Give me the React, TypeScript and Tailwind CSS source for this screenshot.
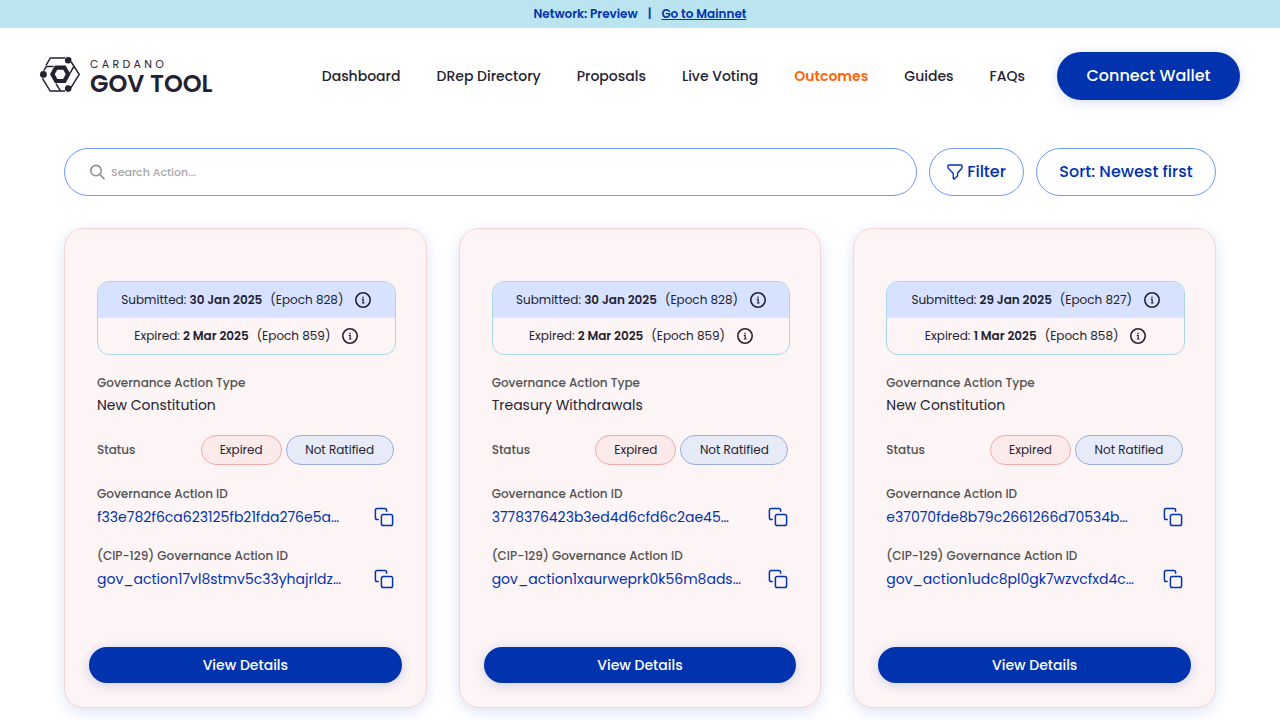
import React from "react";

const navItems = [
  { label: "Dashboard" },
  { label: "DRep Directory" },
  { label: "Proposals" },
  { label: "Live Voting" },
  { label: "Outcomes", active: true },
  { label: "Guides" },
  { label: "FAQs" },
];

interface Outcome {
  submitted: string;
  submittedEpoch: number;
  expired: string;
  expiredEpoch: number;
  type: string;
  id: string;
  cipId: string;
}

const outcomes: Outcome[] = [
  {
    submitted: "30 Jan 2025",
    submittedEpoch: 828,
    expired: "2 Mar 2025",
    expiredEpoch: 859,
    type: "New Constitution",
    id: "f33e782f6ca623125fb21fda276e5a…",
    cipId: "gov_action17vl8stmv5c33yhajrldz…",
  },
  {
    submitted: "30 Jan 2025",
    submittedEpoch: 828,
    expired: "2 Mar 2025",
    expiredEpoch: 859,
    type: "Treasury Withdrawals",
    id: "3778376423b3ed4d6cfd6c2ae45…",
    cipId: "gov_action1xaurweprk0k56m8ads…",
  },
  {
    submitted: "29 Jan 2025",
    submittedEpoch: 827,
    expired: "1 Mar 2025",
    expiredEpoch: 858,
    type: "New Constitution",
    id: "e37070fde8b79c2661266d70534b…",
    cipId: "gov_action1udc8pl0gk7wzvcfxd4c…",
  },
];

function LogoMark() {
  return (
    <svg width="40" height="38" viewBox="0 0 40 38" fill="none" stroke="#242232" aria-hidden="true">
      <g strokeWidth="1.5">
        <path d="M25 0.9H10.4L6 8.4" />
        <path d="M31.2 5L39.2 17.4L31 30.6" />
        <path d="M2.4 21.4L10.2 34.1H25" />
        <path d="M3.8 13.6L6.4 9.5H13.6" />
        <path d="M33.8 9.6L29.9 16.4" />
        <path d="M16 26.6L20.4 33.8" />
      </g>
      <path d="M16.1 10.6H24.4L28.1 17.3L24.4 24H16.1L12.4 17.3Z" strokeWidth="4.2" />
      <g fill="#242232" stroke="none">
        <circle cx="28.2" cy="3.3" r="3.3" />
        <circle cx="3.4" cy="17.4" r="3.4" />
        <circle cx="28.2" cy="31.6" r="3.3" />
      </g>
    </svg>
  );
}

function SearchIcon() {
  return (
    <svg width="16" height="16" viewBox="0 0 16 16" fill="none" stroke="#8e908e" strokeWidth="1.6" strokeLinecap="round" aria-hidden="true">
      <circle cx="7" cy="6.6" r="5.2" />
      <path d="M10.9 10.5L15 14.6" />
    </svg>
  );
}

function FilterIcon() {
  return (
    <svg width="16" height="16" viewBox="0 0 16 16" fill="none" stroke="#0033ad" strokeWidth="1.4" strokeLinejoin="round" aria-hidden="true">
      <path d="M1.8 1H14.2Q15 1 15 1.8V3.2Q15 4 14.4 4.7L10.6 9V11.8L7.2 15L6.3 14.6V10.4Q6.3 9.5 5.7 8.7L1.5 4.5Q1 3.9 1 3.2V1.8Q1 1 1.8 1Z" />
    </svg>
  );
}

function InfoIcon() {
  return (
    <svg width="16" height="16" viewBox="0 0 16 16" fill="none" stroke="#242232" aria-hidden="true">
      <circle cx="8" cy="8" r="7.2" strokeWidth="1.6" />
      <path d="M6.8 7.4H8.2V11M6.9 11H9.5" strokeWidth="1.2" />
      <circle cx="8" cy="5.2" r="0.8" fill="#242232" stroke="none" />
    </svg>
  );
}

function CopyIcon() {
  return (
    <svg width="20" height="20" viewBox="0 0 20 20" fill="none" stroke="#0033ad" strokeWidth="1.5" strokeLinecap="round" strokeLinejoin="round" aria-hidden="true">
      <rect x="7.4" y="7.4" width="11.2" height="11.2" rx="1.8" />
      <path d="M4.2 12.6H3.2A1.8 1.8 0 0 1 1.4 10.8V3.2A1.8 1.8 0 0 1 3.2 1.4H10.8A1.8 1.8 0 0 1 12.6 3.2V4.2" />
    </svg>
  );
}

function DateRow({ label, date, epoch }: { label: string; date: string; epoch: number }) {
  return (
    <div className="flex h-9 items-center justify-center text-xs">
      <span>
        {label}: <strong className="font-semibold">{date}</strong>
      </span>
      <span className="ml-2">(Epoch {epoch})</span>
      <button type="button" aria-label={`About the ${label.toLowerCase()} date`} className="ml-3">
        <InfoIcon />
      </button>
    </div>
  );
}

function IdField({ label, value }: { label: string; value: string }) {
  return (
    <div>
      <h3 className="text-xs leading-[22px] font-medium text-[#525252]">{label}</h3>
      <div className="flex h-6 items-center justify-between pr-0.5">
        <span className="text-sm whitespace-nowrap text-[#0033ad]">{value}</span>
        <button type="button" aria-label={`Copy ${label}`}>
          <CopyIcon />
        </button>
      </div>
    </div>
  );
}

function OutcomeCard({ item }: { item: Outcome }) {
  return (
    <article className="flex flex-col rounded-[20px] border border-[#f8d4d4] bg-[#fdf4f5] px-6 pt-13 pb-6 shadow-[0_4px_15px_0_#dde3f5]">
      <div className="flex flex-col pr-1.5 pl-2">
        <div className="overflow-hidden rounded-xl border border-[#a9d8e4]">
          <div className="bg-[#d6e2ff]">
            <DateRow label="Submitted" date={item.submitted} epoch={item.submittedEpoch} />
          </div>
          <DateRow label="Expired" date={item.expired} epoch={item.expiredEpoch} />
        </div>

        <div className="mt-4">
          <h3 className="text-xs leading-6 font-medium text-[#525252]">Governance Action Type</h3>
          <p className="text-sm leading-5">{item.type}</p>
        </div>

        <div className="mt-5 flex h-[30px] items-center justify-between pr-0.5">
          <h3 className="text-xs font-medium text-[#525252]">Status</h3>
          <div className="flex gap-1 text-xs">
            <span className="flex h-[30px] w-[81px] items-center justify-center rounded-full border border-[#efabab] bg-[#fbeaea]">
              Expired
            </span>
            <span className="flex h-[30px] w-[108px] items-center justify-center rounded-full border border-[#99addf] bg-[#e6ebf7]">
              Not Ratified
            </span>
          </div>
        </div>

        <div className="mt-[18px] flex flex-col gap-4">
          <IdField label="Governance Action ID" value={item.id} />
          <IdField label="(CIP-129) Governance Action ID" value={item.cipId} />
        </div>
      </div>

      <button
        type="button"
        className="mt-14 h-9 rounded-full bg-[#0033ad] text-sm font-medium text-white shadow-[0_2px_12px_0_#cfcee6]"
      >
        View Details
      </button>
    </article>
  );
}

export default function App() {
  return (
    <div className="min-h-screen bg-white font-[Poppins,Inter,sans-serif] text-[#242232]">
      <div className="flex h-7 items-center justify-center gap-2.5 bg-[#bbe4f1] text-xs font-semibold text-[#0033ad]">
        <span>Network: Preview</span>
        <span>|</span>
        <a href="#mainnet" className="underline">
          Go to Mainnet
        </a>
      </div>

      <header className="flex h-24 items-center justify-between px-10">
        <a href="#home" className="flex items-center gap-2.5" aria-label="Cardano Gov Tool">
          <LogoMark />
          <span className="flex flex-col">
            <span className="text-[11px] leading-4 tracking-[0.3em]">CARDANO</span>
            <span className="text-2xl leading-6 font-semibold">GOV TOOL</span>
          </span>
        </a>
        <div className="flex items-center gap-8">
          <nav className="flex gap-9 text-sm whitespace-nowrap">
            {navItems.map((item) => (
              <a
                key={item.label}
                href="#nav"
                className={item.active ? "font-semibold text-[#ff640a]" : "font-medium"}
              >
                {item.label}
              </a>
            ))}
          </nav>
          <button
            type="button"
            className="h-12 w-[183px] rounded-full bg-[#0033ad] font-medium whitespace-nowrap text-white shadow-[0_2px_12px_0_#d5dcf5]"
          >
            Connect Wallet
          </button>
        </div>
      </header>

      <main className="px-16 pt-6 pb-3">
        <div className="flex gap-3">
          <label className="flex h-12 flex-1 items-center gap-1.5 rounded-full border border-[#6f99ff] px-6">
            <SearchIcon />
            <input
              type="text"
              aria-label="Search actions"
              placeholder="Search Action..."
              className="flex-1 text-[11px] font-medium outline-none placeholder:text-[#a6a6a6]"
            />
          </label>
          <button
            type="button"
            className="flex h-12 w-[95px] items-center justify-center gap-1 rounded-full border border-[#6f99ff] font-medium text-[#0033ad]"
          >
            <FilterIcon />
            Filter
          </button>
          <button
            type="button"
            className="h-12 w-[180px] rounded-full border border-[#6f99ff] font-medium text-[#0033ad]"
          >
            Sort: Newest first
          </button>
        </div>

        <div className="mt-8 grid grid-cols-3 gap-8">
          {outcomes.map((item) => (
            <OutcomeCard key={item.id} item={item} />
          ))}
        </div>
      </main>
    </div>
  );
}
